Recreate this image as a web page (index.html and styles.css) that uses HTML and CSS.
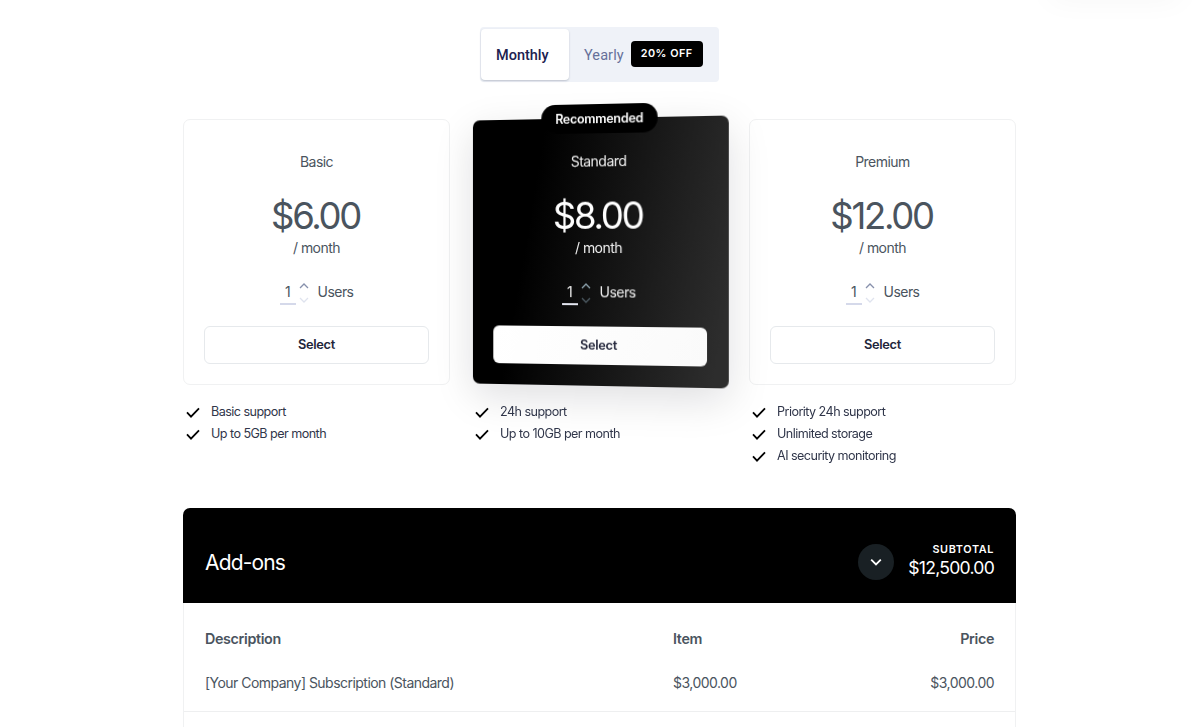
FILE: index.html
```
<!DOCTYPE html>
<html lang="en">
<head>
<meta charset="UTF-8" />
<meta name="viewport" content="width=device-width, initial-scale=1" />
<title>Pricing</title>
<link rel="stylesheet" href="styles.css">
</head>
<body>

<svg width="0" height="0" class="sprite">
  <symbol id="check" viewBox="0 0 14 11"><path d="M1 5.4 5 9.6 13 1.4" /></symbol>
  <symbol id="up" viewBox="0 0 10 6"><path d="M1 5 5 1l4 4" /></symbol>
  <symbol id="down" viewBox="0 0 10 6"><path d="M1 1l4 4 4-4" /></symbol>
</svg>

<div class="corner-shadow"></div>

<main>
  <div class="toggle">
    <div class="toggle-item active">Monthly</div>
    <div class="toggle-item">Yearly <span class="discount">20% OFF</span></div>
  </div>

  <section class="plans">
    <div class="plan">
      <div class="card">
        <div class="name">Basic</div>
        <div class="price">$6.00</div>
        <div class="period">/ month</div>
        <div class="users">
          <span class="count">1</span>
          <span class="stepper"><svg><use href="#up" /></svg><svg class="off"><use href="#down" /></svg></span>
          <span>Users</span>
        </div>
        <button>Select</button>
      </div>
      <ul class="features">
        <li><svg><use href="#check" /></svg>Basic support</li>
        <li><svg><use href="#check" /></svg>Up to 5GB per month</li>
      </ul>
    </div>

    <div class="plan">
      <div class="card featured">
        <div class="badge">Recommended</div>
        <div class="name">Standard</div>
        <div class="price">$8.00</div>
        <div class="period">/ month</div>
        <div class="users">
          <span class="count">1</span>
          <span class="stepper"><svg><use href="#up" /></svg><svg class="off"><use href="#down" /></svg></span>
          <span>Users</span>
        </div>
        <button>Select</button>
      </div>
      <ul class="features">
        <li><svg><use href="#check" /></svg>24h support</li>
        <li><svg><use href="#check" /></svg>Up to 10GB per month</li>
      </ul>
    </div>

    <div class="plan">
      <div class="card">
        <div class="name">Premium</div>
        <div class="price">$12.00</div>
        <div class="period">/ month</div>
        <div class="users">
          <span class="count">1</span>
          <span class="stepper"><svg><use href="#up" /></svg><svg class="off"><use href="#down" /></svg></span>
          <span>Users</span>
        </div>
        <button>Select</button>
      </div>
      <ul class="features">
        <li><svg><use href="#check" /></svg>Priority 24h support</li>
        <li><svg><use href="#check" /></svg>Unlimited storage</li>
        <li><svg><use href="#check" /></svg>AI security monitoring</li>
      </ul>
    </div>
  </section>

  <section class="addons">
    <div class="addons-header">
      <h2>Add-ons</h2>
      <div class="expand"><svg><use href="#down" /></svg></div>
      <div class="subtotal">
        <div class="subtotal-label">SUBTOTAL</div>
        <div class="subtotal-value">$12,500.00</div>
      </div>
    </div>
    <div class="row head">
      <div>Description</div>
      <div>Item</div>
      <div>Price</div>
    </div>
    <div class="row">
      <div>[Your Company] Subscription (Standard)</div>
      <div>$3,000.00</div>
      <div>$3,000.00</div>
    </div>
  </section>
</main>

</body>
</html>
```
FILE: styles.css
```
* {
  box-sizing: border-box;
}
body {
  margin: 0;
  position: relative;
  font-family: Inter, sans-serif;
  background: #fff;
  color: #4a545e;
  font-size: 14px;
  letter-spacing: -0.53px;
}
.sprite {
  position: absolute;
}
svg {
  fill: none;
  stroke: currentColor;
}
.corner-shadow {
  position: absolute;
  top: -20px;
  left: 1050px;
  width: 130px;
  height: 18px;
  box-shadow: 0 0 30px rgba(0,0,0,0.05);
}
main {
  width: 833px;
  margin-left: 183px;
  padding-top: 27px;
}

/* billing toggle */
.toggle {
  display: flex;
  width: 239px;
  height: 55px;
  margin: 0 auto;
  padding: 2px 1px;
  border-radius: 4px;
  background: #eff2f8;
  font-family: Roboto, sans-serif;
  font-size: 14.5px;
  color: #66709a;
}
.toggle-item {
  display: flex;
  align-items: center;
  padding: 1px 0 0 15px;
  letter-spacing: 0.1px;
}
.toggle-item.active {
  width: 88px;
  height: 51px;
  background: #fff;
  border-radius: 4px;
  color: #20214f;
  font-weight: 500;
  letter-spacing: 0;
  box-shadow: 0 1px 2px rgba(40,50,80,0.25);
}
.discount {
  width: 72px;
  margin: -2px 0 0 7px;
  border-radius: 4px;
  background: #000;
  color: #fff;
  font: 600 10.8px/26px Inter, sans-serif;
  letter-spacing: 0.5px;
  text-align: center;
}

/* plans */
.plans {
  display: grid;
  grid-template-columns: 267px 255px 267px;
  justify-content: space-between;
  margin-top: 37px;
  height: 389px;
}
.card {
  height: 266px;
  padding: 31px 20px 21px;
  border: 1px solid #f0f1f2;
  border-radius: 7px;
  text-align: center;
}
.name, .period {
  line-height: 22px;
}
.price {
  margin-top: 20px;
  font-size: 36.5px;
  font-weight: 400;
  line-height: 46px;
  letter-spacing: -2.3px;
  text-indent: -2px;
}
.period {
  margin-top: -2px;
}
.users {
  display: flex;
  justify-content: center;
  margin-top: 20px;
  height: 26px;
  line-height: 25px;
}
.count {
  width: 16px;
  border-bottom: 2px solid #d5d9ea;
}
.stepper {
  display: flex;
  flex-direction: column;
  gap: 8px;
  width: 10px;
  margin: 4px 9px 0 3px;
  color: #8790ac;
}
.stepper svg {
  width: 10px;
  height: 6px;
  stroke-width: 1.3;
}
.stepper .off {
  color: #dfe3ee;
}
button {
  display: block;
  width: 100%;
  height: 38px;
  margin-top: 21px;
  padding: 0 0 1px;
  border: 1px solid #e6e9ec;
  border-radius: 6px;
  background: #fff;
  color: #22253a;
  font: 600 12.8px Inter, sans-serif;
  letter-spacing: -0.3px;
}
.featured {
  position: relative;
  left: -1px;
  border: 0;
  padding: 32px 21px 21px;
  background: linear-gradient(100deg, #000 25%, #2d2d2d 95%);
  color: #eee;
  box-shadow: 0 12px 40px rgba(0,0,20,0.13);
  transform: perspective(600px) rotateY(-5deg) scale(1.007);
}
.featured .price {
  color: #fff;
}
.featured .count {
  border-color: #e4e6f0;
}
.featured .stepper {
  color: #8fa5b0;
}
.featured .off {
  color: #4d5a62;
}
.featured button {
  border: 0;
  background: linear-gradient(110deg, #fff, #fafafa);
}
.badge {
  position: absolute;
  top: -14px;
  left: 70px;
  width: 116px;
  border-radius: 14px;
  background: #000;
  color: #fff;
  font-size: 12.5px;
  font-weight: 600;
  line-height: 29px;
  letter-spacing: -0.28px;
}
.features {
  position: relative;
  list-style: none;
  margin: 16px 0 0;
  padding: 0;
  color: #30364a;
  font-size: 12.6px;
  letter-spacing: -0.55px;
  line-height: 22px;
}
.features li {
  display: flex;
  align-items: center;
  padding-left: 3px;
}
.features svg {
  width: 14px;
  height: 11px;
  margin-right: 11px;
  color: #000;
  stroke-width: 1.8;
}

/* add-ons table */
.addons {
  border: 1px solid #f0f1f2;
  border-top: 0;
  border-bottom: 0;
  border-radius: 7px 7px 0 0;
  height: 219px;
}
.addons-header {
  display: flex;
  align-items: center;
  height: 94.5px;
  margin: 0 -1px;
  padding: 14px 22px 0;
  border-radius: 7px 7px 0 0;
  background: #000;
  color: #fff;
}
h2 {
  margin: 0 auto 0 0;
  font-size: 21px;
  font-weight: 400;
  letter-spacing: -0.85px;
}
.expand {
  display: flex;
  align-items: center;
  justify-content: center;
  width: 36px;
  height: 36px;
  margin-right: 14px;
  border-radius: 50%;
  background: #192024;
}
.expand svg {
  width: 12px;
  height: 8px;
  stroke-width: 1.5;
}
.subtotal {
  margin-top: -3px;
  text-align: right;
}
.subtotal-label {
  font-size: 10.8px;
  font-weight: 600;
  line-height: 14px;
  letter-spacing: 0.65px;
}
.subtotal-value {
  font-size: 17.6px;
  font-weight: 400;
  line-height: 22px;
  letter-spacing: -0.75px;
}
.row {
  display: grid;
  grid-template-columns: 468px 1fr 1fr;
  height: 59px;
  padding: 18px 21px;
  line-height: 24px;
  border-bottom: 1px solid #eeeff0;
}
.row.head {
  height: 50px;
  padding-top: 24px;
  border: 0;
  font-size: 14.3px;
  font-weight: 600;
  letter-spacing: -0.35px;
}
.row div:last-child {
  text-align: right;
}
```
